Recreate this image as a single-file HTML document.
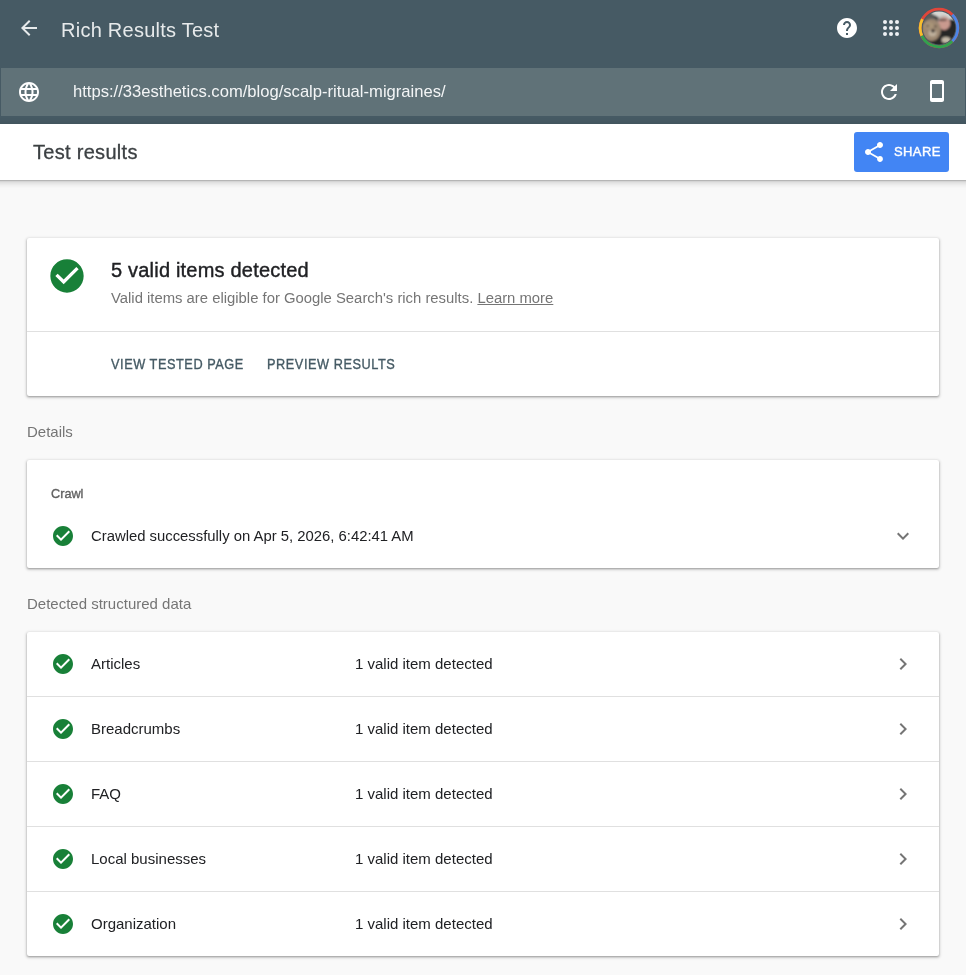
<!DOCTYPE html>
<html><head><meta charset="utf-8">
<style>
*{box-sizing:border-box;margin:0;padding:0}
html,body{width:966px;height:975px;overflow:hidden;background:#f9f9f9;will-change:transform;font-family:"Liberation Sans",sans-serif;position:relative}
.abs{position:absolute}
#top{left:0;top:0;width:966px;height:124px;background:#465a64}
#urlbar{left:1px;top:68px;width:964px;height:48px;background:#607278}
#title{left:61px;top:17.6px;font-size:20px;letter-spacing:.25px;line-height:24px;color:#e7eaeb;white-space:nowrap}
#url{left:73px;top:82px;font-size:16.6px;line-height:20px;color:#f3f5f6;white-space:nowrap}
#hdr{left:-20px;top:124px;width:1006px;height:56px;background:#fff;box-shadow:0 1px 1px rgba(0,0,0,.15),0 2px 7px rgba(0,0,0,.22)}
#hdrt{left:33px;top:140px;font-size:20px;letter-spacing:.3px;-webkit-text-stroke:.3px #3c4043;line-height:24px;color:#3c4043;white-space:nowrap}
#share{left:854px;top:132px;width:95px;height:40px;background:#4285f4;border-radius:3px;color:#fff}
.card{left:27px;width:912px;background:#fff;border-radius:2px;box-shadow:0 1px 2px rgba(0,0,0,.26),0 1px 3px 1px rgba(0,0,0,.14)}
.lbl{left:27px;font-size:15px;line-height:18px;color:#757575;white-space:nowrap}
.row{position:absolute;left:0;width:912px;height:64px}
.div{position:absolute;left:0;width:912px;height:1px;background:#e0e0e0}
.rt{position:absolute;left:64px;top:22px;font-size:15px;line-height:20px;color:#202124;white-space:nowrap}
.rv{position:absolute;left:328px;top:22px;font-size:15px;line-height:20px;color:#202124;white-space:nowrap}
.btn{position:absolute;top:118px;font-size:14px;line-height:16px;letter-spacing:.6px;transform:scaleX(.91);transform-origin:0 0;-webkit-text-stroke:.35px #455a64;color:#455a64;white-space:nowrap}
</style></head><body>
<div id="top" class="abs"></div>
<div id="urlbar" class="abs"></div>
<svg class="abs" style="left:17px;top:16px" width="24" height="24" viewBox="0 0 24 24"><path fill="#e7eaeb" d="M20 11H7.830l5.59-5.59L12 4l-8 8 8 8 1.41-1.41L7.83 13H20v-2z"/></svg>
<div id="title" class="abs">Rich Results Test</div>
<svg class="abs" style="left:835px;top:16px" width="24" height="24" viewBox="0 0 24 24"><path fill="#fff" d="M12 2C6.48 2 2 6.48 2 12s4.48 10 10 10 10-4.48 10-10S17.52 2 12 2zm1 17h-2v-2h2v2zm2.070-7.75l-.9.92C13.45 12.9 13 13.5 13 15h-2v-.5c0-1.1.45-2.1 1.17-2.83l1.24-1.26c.37-.36.59-.86.59-1.41 0-1.1-.9-2-2-2s-2 .9-2 2H8c0-2.21 1.79-4 4-4s4 1.790 4 4c0 .88-.36 1.68-.93 2.25z"/></svg>
<svg class="abs" style="left:879px;top:16px" width="24" height="24" viewBox="0 0 24 24" fill="#eef0f4"><circle cx="6" cy="6" r="2"/><circle cx="12" cy="6" r="2"/><circle cx="18" cy="6" r="2"/><circle cx="6" cy="12" r="2"/><circle cx="12" cy="12" r="2"/><circle cx="18" cy="12" r="2"/><circle cx="6" cy="18" r="2"/><circle cx="12" cy="18" r="2"/><circle cx="18" cy="18" r="2"/></svg>
<svg class="abs" style="left:918px;top:7px" width="42" height="42" viewBox="0 0 42 42">
<defs><clipPath id="ph"><circle cx="21" cy="21" r="16.4"/></clipPath><filter id="bl" x="-20%" y="-20%" width="140%" height="140%"><feGaussianBlur stdDeviation="0.9"/></filter></defs>
<circle cx="21" cy="21" r="18.9" fill="none" stroke="#e0463a" stroke-width="2.8"/>
<path d="M34.3 7.7 A18.9 18.9 0 0 1 34.3 34.3" fill="none" stroke="#4a86e8" stroke-width="2.8"/>
<path d="M34.3 34.3 A18.9 18.9 0 0 1 3.8 28.6" fill="none" stroke="#30a24f" stroke-width="2.8"/>
<path d="M3.8 28.6 A18.9 18.9 0 0 1 4.4 12.2" fill="none" stroke="#f4c02e" stroke-width="2.8"/>
<g clip-path="url(#ph)"><g filter="url(#bl)">
<rect x="0" y="0" width="42" height="42" fill="#262626"/>
<path d="M11 2 L38 2 L38 13 L30 12 L20 10 L14 7 Z" fill="#d6d6d2"/>
<path d="M2 5 L12 6 L19 12 L18 18 L3 21 Z" fill="#5c5c5a"/>
<ellipse cx="25.5" cy="13.5" rx="6" ry="5" fill="#bdb5b0"/>
<ellipse cx="26.2" cy="16.5" rx="6" ry="6.5" fill="#c9998e"/>
<ellipse cx="24.5" cy="13" rx="4.5" ry="1.2" fill="#6a5550"/>
<ellipse cx="13.4" cy="23" rx="9.5" ry="11" fill="#9d8872"/>
<ellipse cx="11" cy="18.5" rx="5" ry="3.5" fill="#a99478"/>
<ellipse cx="14.5" cy="26" rx="4" ry="3.5" fill="#bfb09c"/>
<ellipse cx="15" cy="23.8" rx="2" ry="1.6" fill="#2a2420"/>
<ellipse cx="9.6" cy="18.8" rx="1.1" ry=".9" fill="#3a302a"/>
<ellipse cx="17.5" cy="19.3" rx="1.1" ry=".9" fill="#3a302a"/>
<path d="M3 30 L12 36 L10 40 L2 40 Z" fill="#5a4a3a"/>
<ellipse cx="28" cy="33" rx="4.5" ry="3" fill="#c4b9a8"/>
</g></g>
</svg>
<svg class="abs" style="left:17px;top:80px" width="24" height="24" viewBox="0 0 24 24"><path fill="#fff" d="M11.99 2C6.47 2 2 6.48 2 12s4.47 10 9.99 10C17.52 22 22 17.52 22 12S17.52 2 11.99 2zm6.93 6h-2.95c-.32-1.25-.78-2.45-1.38-3.56 1.84.63 3.37 1.91 4.33 3.56zM12 4.04c.83 1.2 1.48 2.53 1.91 3.96h-3.82c.43-1.43 1.08-2.76 1.91-3.96zM4.26 14C4.1 13.36 4 12.69 4 12s.1-1.36.26-2h3.380c-.08.66-.14 1.32-.14 2 0 .68.06 1.34.14 2H4.26zm.82 2h2.95c.32 1.25.78 2.45 1.38 3.56-1.84-.63-3.37-1.9-4.33-3.56zm2.950-8H5.08c.96-1.66 2.49-2.93 4.33-3.56C8.81 5.55 8.35 6.75 8.03 8zM12 19.96c-.83-1.2-1.48-2.53-1.91-3.96h3.82c-.43 1.43-1.08 2.76-1.91 3.96zM14.34 14H9.66c-.09-.66-.16-1.32-.16-2 0-.68.07-1.35.16-2h4.68c.09.65.16 1.32.16 2 0 .68-.07 1.34-.16 2zm.25 5.56c.6-1.11 1.06-2.31 1.38-3.56h2.95c-.96 1.65-2.49 2.93-4.33 3.56zM16.36 14c.08-.66.14-1.32.14-2 0-.68-.06-1.34-.14-2h3.38c.16.64.26 1.31.26 2s-.1 1.36-.26 2h-3.38z"/></svg>
<div id="url" class="abs">https://33esthetics.com/blog/scalp-ritual-migraines/</div>
<svg class="abs" style="left:877px;top:80px" width="24" height="24" viewBox="0 0 24 24"><path fill="#fff" d="M17.65 6.35C16.2 4.9 14.21 4 12 4c-4.42 0-7.99 3.58-7.99 8s3.57 8 7.99 8c3.73 0 6.84-2.55 7.73-6h-2.08c-.82 2.33-3.04 4-5.650 4-3.31 0-6-2.69-6-6s2.69-6 6-6c1.66 0 3.14.69 4.22 1.78L13 11h7V4l-2.35 2.35z"/></svg>
<svg class="abs" style="left:925px;top:79px" width="24" height="24" viewBox="0 0 24 24"><path fill="#fff" d="M17 1.01L7 1c-1.1 0-1.99.9-1.99 2v18c0 1.1.89 2 1.99 2h10c1.1 0 2-.9 2-2V3c0-1.1-.9-1.99-2-1.99zM17 19H7V5h10v14z"/></svg>

<div id="hdr" class="abs"></div>
<div id="hdrt" class="abs">Test results</div>
<div id="share" class="abs">
<svg class="abs" style="left:8px;top:8px" width="24" height="24" viewBox="0 0 24 24"><path fill="#fff" d="M18 16.08c-.76 0-1.44.3-1.96.77L8.91 12.7c.05-.23.09-.46.09-.7s-.04-.47-.09-.7l7.05-4.11c.54.5 1.25.81 2.04.81 1.66 0 3-1.34 3-3s-1.34-3-3-3-3 1.34-3 3c0 .24.04.47.09.7L8.04 9.81C7.5 9.31 6.79 9 6 9c-1.66 0-3 1.34-3 3s1.34 3 3 3c.79 0 1.5-.31 2.04-.81l7.12 4.16c-.05.21-.08.43-.08.65 0 1.61 1.31 2.92 2.92 2.92 1.61 0 2.92-1.31 2.92-2.92s-1.31-2.92-2.92-2.92z"/></svg>
<div class="abs" style="left:40px;top:12px;font-size:13px;line-height:16px;letter-spacing:.4px;-webkit-text-stroke:.4px #fff">SHARE</div>
</div>

<div class="card abs" style="top:238px;height:158px">
<svg class="abs" style="left:20px;top:18px" width="40" height="40" viewBox="0 0 24 24"><path fill="#188038" d="M12 2C6.48 2 2 6.48 2 12s4.48 10 10 10 10-4.48 10-10S17.52 2 12 2zm-2 15l-5-5 1.41-1.41L10 14.17l7.59-7.59L19 8l-9 9z"/></svg>
<div class="abs" style="left:84px;top:20px;font-size:20px;letter-spacing:.2px;-webkit-text-stroke:.4px #202124;line-height:24px;color:#202124;white-space:nowrap">5 valid items detected</div>
<div class="abs" style="left:84px;top:51px;font-size:14.85px;line-height:18px;color:#757575;white-space:nowrap">Valid items are eligible for Google Search's rich results. <span style="text-decoration:underline">Learn more</span></div>
<div class="div" style="top:93px"></div>
<div class="btn" style="left:84px">VIEW TESTED PAGE</div>
<div class="btn" style="left:240px">PREVIEW RESULTS</div>
</div>

<div class="lbl abs" style="top:423px">Details</div>
<div class="card abs" style="top:460px;height:108px">
<div class="abs" style="left:24px;top:27px;font-size:12.7px;line-height:14px;-webkit-text-stroke:.35px #616161;color:#616161">Crawl</div>
<svg class="abs" style="left:24px;top:64px" width="24" height="24" viewBox="0 0 24 24"><path fill="#188038" d="M12 2C6.48 2 2 6.48 2 12s4.48 10 10 10 10-4.48 10-10S17.52 2 12 2zm-2 15l-5-5 1.41-1.41L10 14.17l7.59-7.59L19 8l-9 9z"/></svg>
<div class="abs" style="left:64px;top:66px;font-size:14.85px;line-height:20px;color:#202124;white-space:nowrap">Crawled successfully on Apr 5, 2026, 6:42:41 AM</div>
<svg class="abs" style="left:864px;top:64px" width="24" height="24" viewBox="0 0 24 24"><path fill="#757575" d="M16.59 8.59L12 13.17 7.41 8.59 6 10l6 6 6-6z"/></svg>
</div>

<div class="lbl abs" style="top:595px">Detected structured data</div>
<div class="card abs" style="top:632px;height:324px">
<div class="row" style="top:0px">
<svg class="abs" style="left:24px;top:20px" width="24" height="24" viewBox="0 0 24 24"><path fill="#188038" d="M12 2C6.48 2 2 6.48 2 12s4.48 10 10 10 10-4.48 10-10S17.52 2 12 2zm-2 15l-5-5 1.41-1.41L10 14.17l7.59-7.59L19 8l-9 9z"/></svg>
<div class="rt">Articles</div><div class="rv">1 valid item detected</div>
<svg class="abs" style="left:864px;top:20px" width="24" height="24" viewBox="0 0 24 24"><path fill="#757575" d="M8.59 16.59L13.17 12 8.59 7.41 10 6l6 6-6 6-1.41-1.41z"/></svg>
</div>
<div class="div" style="top:64px"></div>
<div class="row" style="top:65px">
<svg class="abs" style="left:24px;top:20px" width="24" height="24" viewBox="0 0 24 24"><path fill="#188038" d="M12 2C6.48 2 2 6.48 2 12s4.48 10 10 10 10-4.48 10-10S17.52 2 12 2zm-2 15l-5-5 1.41-1.41L10 14.17l7.59-7.59L19 8l-9 9z"/></svg>
<div class="rt">Breadcrumbs</div><div class="rv">1 valid item detected</div>
<svg class="abs" style="left:864px;top:20px" width="24" height="24" viewBox="0 0 24 24"><path fill="#757575" d="M8.59 16.59L13.17 12 8.59 7.41 10 6l6 6-6 6-1.41-1.41z"/></svg>
</div>
<div class="div" style="top:129px"></div>
<div class="row" style="top:130px">
<svg class="abs" style="left:24px;top:20px" width="24" height="24" viewBox="0 0 24 24"><path fill="#188038" d="M12 2C6.48 2 2 6.48 2 12s4.48 10 10 10 10-4.48 10-10S17.52 2 12 2zm-2 15l-5-5 1.41-1.41L10 14.17l7.59-7.59L19 8l-9 9z"/></svg>
<div class="rt">FAQ</div><div class="rv">1 valid item detected</div>
<svg class="abs" style="left:864px;top:20px" width="24" height="24" viewBox="0 0 24 24"><path fill="#757575" d="M8.59 16.59L13.17 12 8.59 7.41 10 6l6 6-6 6-1.41-1.41z"/></svg>
</div>
<div class="div" style="top:194px"></div>
<div class="row" style="top:195px">
<svg class="abs" style="left:24px;top:20px" width="24" height="24" viewBox="0 0 24 24"><path fill="#188038" d="M12 2C6.48 2 2 6.48 2 12s4.48 10 10 10 10-4.48 10-10S17.52 2 12 2zm-2 15l-5-5 1.41-1.41L10 14.17l7.59-7.59L19 8l-9 9z"/></svg>
<div class="rt">Local businesses</div><div class="rv">1 valid item detected</div>
<svg class="abs" style="left:864px;top:20px" width="24" height="24" viewBox="0 0 24 24"><path fill="#757575" d="M8.59 16.59L13.17 12 8.59 7.41 10 6l6 6-6 6-1.41-1.41z"/></svg>
</div>
<div class="div" style="top:259px"></div>
<div class="row" style="top:260px">
<svg class="abs" style="left:24px;top:20px" width="24" height="24" viewBox="0 0 24 24"><path fill="#188038" d="M12 2C6.48 2 2 6.48 2 12s4.48 10 10 10 10-4.48 10-10S17.52 2 12 2zm-2 15l-5-5 1.41-1.41L10 14.17l7.59-7.59L19 8l-9 9z"/></svg>
<div class="rt">Organization</div><div class="rv">1 valid item detected</div>
<svg class="abs" style="left:864px;top:20px" width="24" height="24" viewBox="0 0 24 24"><path fill="#757575" d="M8.59 16.59L13.17 12 8.59 7.41 10 6l6 6-6 6-1.41-1.41z"/></svg>
</div>
</div>
</body></html>
